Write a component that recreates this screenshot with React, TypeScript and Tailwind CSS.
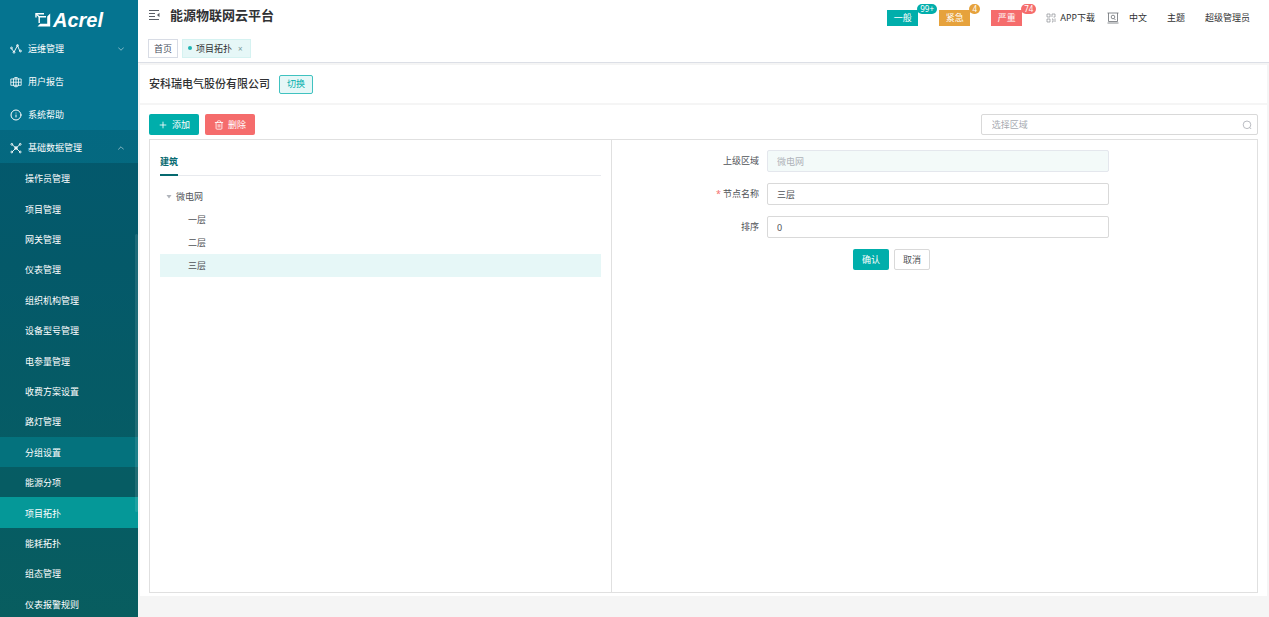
import { ReactNode } from 'react';
import { clsx } from 'clsx';
import { ChevronDown, ChevronUp, Info, Plus, Trash2 } from 'lucide-react';

const systemItems = [
	'操作员管理',
	'项目管理',
	'网关管理',
	'仪表管理',
	'组织机构管理',
	'设备型号管理',
	'电参量管理',
	'收费方案设置',
	'路灯管理',
	'分组设置',
	'能源分项',
	'项目拓扑',
	'能耗拓扑',
	'组态管理',
	'仪表报警规则',
];

const alerts = [
	{ label: '一般', count: '99+', color: 'bg-[#00aeab]' },
	{ label: '紧急', count: '4', color: 'bg-[#e6a23c]' },
	{ label: '严重', count: '74', color: 'bg-[#f56c6c]' },
];

const floors = ['一层', '二层', '三层'];

const LogoMark = () => (
	<svg viewBox="0 0 16 16" className="h-4 w-4" fill="none" stroke="currentColor">
		<path d="M1 5.500V1.700h8" strokeWidth="1.4" />
		<path d="M1.500 2.200 4.500 5" strokeWidth="1.2" />
		<path d="M4.200 11V4.700H11" strokeWidth="1.4" />
		<path d="M15.200 1.500v13H2.500l2.700-2.700h7V4.500z" fill="currentColor" stroke="none" />
	</svg>
);

const TrendIcon = () => (
	<svg viewBox="0 0 12 12" className="h-3 w-3" fill="none" stroke="currentColor" strokeWidth="0.9">
		<path d="M1.500 5.500 4 9l3.500-6.500L10 8.500" />
		<circle cx="1.500" cy="5" r="0.9" />
		<circle cx="4" cy="9.300" r="0.9" />
		<circle cx="7.500" cy="2.500" r="0.9" />
		<circle cx="10.500" cy="8" r="0.9" />
	</svg>
);

const ReportIcon = () => (
	<svg viewBox="0 0 12 12" className="h-3 w-3" fill="none" stroke="currentColor" strokeWidth="0.8">
		<path d="M.8 3h10.400v6.300H.8zM.8 6.200h10.400M3.500 3v6.300M8.500 3v6.300M6 1v10" />
		<path d="M3.500 3c0-2 5-2 5 0M3.500 9.300c0 2 5 2 5 0" />
	</svg>
);

const NodesIcon = () => (
	<svg viewBox="0 0 12 12" className="h-3 w-3" fill="none" stroke="currentColor" strokeWidth="0.9">
		<path d="M2 2.500 6 6l4-3.500M2 10l4-4 4 4" />
		<circle cx="1.800" cy="2.300" r="0.9" />
		<circle cx="10.200" cy="2.300" r="0.9" />
		<circle cx="1.800" cy="10" r="0.9" />
		<circle cx="10.200" cy="10" r="0.9" />
		<circle cx="6" cy="6" r="1.300" />
	</svg>
);

const FoldIcon = () => (
	<svg viewBox="0 0 12 12" className="h-3 w-3" fill="none" stroke="currentColor">
		<path d="M1 1.500h10M1 4.500h6M1 7.500h6M1 10.500h10" />
		<path d="M11.500 3.800v4.400L9 6z" fill="currentColor" stroke="none" />
	</svg>
);

const QrIcon = () => (
	<svg viewBox="0 0 10 10" className="h-[10px] w-[10px] text-[#8b8e94]" fill="none" stroke="currentColor" strokeWidth="0.7">
		<path d="M1 1h3v3H1zM1 6h3v3H1zM6 1h3v3H7.500M6 4V1M6 6h1v3M9 5.500V9M6 9h1" />
	</svg>
);

const ScreenIcon = () => (
	<svg viewBox="0 0 12 12" className="h-3 w-3 text-[#6b6e74]" fill="none" stroke="currentColor" strokeWidth="0.8">
		<path d="M.5 1h11M1.500 1v8.500h9V1M.5 11h11" />
		<circle cx="6" cy="5" r="1.800" />
		<path d="m7 6.500 1.500 1.500" />
	</svg>
);

const SearchIcon = () => (
	<svg viewBox="0 0 10 10" className="absolute top-1.5 right-1.5 h-[10px] w-[10px] text-[#a8abb2]" fill="none" stroke="currentColor" strokeWidth="0.8">
		<circle cx="5" cy="4.800" r="3.800" />
		<path d="m7.700 7.500 1.500 1.500" />
	</svg>
);

const MenuRow = ({ icon, label, open }: { icon: ReactNode; label: string; open?: boolean }) => (
	<a href="#" className={clsx('flex h-[33px] items-center gap-1.5 pt-0.5 pr-3 pl-[10px]', open && 'bg-black/10')}>
		{icon}
		<span className="flex-1">{label}</span>
		{open === true && <ChevronUp className="h-2.5 w-2.5 opacity-60" strokeWidth={2} />}
		{open === false && <ChevronDown className="h-2.5 w-2.5 opacity-60" strokeWidth={2} />}
	</a>
);

const Sidebar = () => (
	<aside className="relative flex w-[138px] shrink-0 flex-col overflow-hidden bg-linear-to-b from-[#057490] from-20% to-[#0b7b7e] text-white">
		<div className="flex h-[31px] items-center justify-center gap-0.5 pt-2">
			<LogoMark />
			<span className="font-['Liberation_Sans',sans-serif] text-[20px] leading-5 font-bold italic">Acrel</span>
		</div>
		<nav className="flex flex-1 flex-col">
			<MenuRow icon={<TrendIcon />} label="运维管理" open={false} />
			<MenuRow icon={<ReportIcon />} label="用户报告" />
			<MenuRow icon={<Info className="h-3 w-3" strokeWidth={2} />} label="系统帮助" />
			<MenuRow icon={<NodesIcon />} label="基础数据管理" open />
			<ul className="-mb-0.5 flex flex-1 flex-col bg-black/24">
				{systemItems.map((item) => (
					<li key={item} className="flex min-h-[30px] flex-1">
						<a
							href="#"
							className={clsx(
								'flex flex-1 items-center pt-0.5 pl-[25px]',
								item === '项目拓扑' && 'bg-[#059898]',
								item === '分组设置' && 'bg-[#04727d]',
							)}
						>
							{item}
						</a>
					</li>
				))}
			</ul>
		</nav>
		<div className="absolute top-[234px] right-0 h-[278px] w-[3px] rounded bg-white/10" />
	</aside>
);

const Header = () => (
	<header className="border-b border-[#dcdfe6] bg-white px-[10px]">
		<div className="flex h-8 items-center pr-[9px] text-[#303133]">
			<button type="button" aria-label="折叠菜单" className="pb-0.5 text-[#5a5e66]">
				<FoldIcon />
			</button>
			<h1 className="ml-[10px] flex-1 pb-0.5 text-[13px] leading-4 font-bold">能源物联网云平台</h1>
			<div className="flex gap-[21px] pt-1">
				{alerts.map((alert) => (
					<button key={alert.label} type="button" className={clsx('relative h-4 w-[31px] text-white', alert.color)}>
						{alert.label}
						<span
							className={clsx(
								'absolute -top-1.5 left-full min-w-[11px] -translate-x-px rounded-full px-[3px] text-[8px] leading-[10px]',
								alert.color,
							)}
						>
							{alert.count}
						</span>
					</button>
				))}
			</div>
			<div className="ml-6 flex items-center pt-1">
				<a href="#" className="flex items-center gap-1">
					<QrIcon />
					APP下载
				</a>
				<button type="button" aria-label="大屏" className="ml-3">
					<ScreenIcon />
				</button>
				<button type="button" className="ml-[10px]">中文</button>
				<button type="button" className="ml-5">主题</button>
				<button type="button" className="ml-5">超级管理员</button>
			</div>
		</div>
		<nav className="flex h-[30px] items-center gap-1 pt-0.5">
			<a href="#" className="border border-[#d8dce5] px-[5px] leading-[17px] text-[#495060]">
				首页
			</a>
			<a href="#" className="flex items-center gap-1 border border-[#d5f2f1] bg-[#e6f7f7] px-[5px] leading-[17px] text-[#303133]">
				<span className="h-1 w-1 rounded-full bg-[#1fb5b3]" />
				项目拓扑
				<span className="px-0.5 text-[8px] text-[#7a9a9a]">×</span>
			</a>
		</nav>
	</header>
);

const Tree = () => (
	<section className="w-[41.75%] border-r border-[#e0e0e0] px-[10px] pt-[10px]">
		<div className="flex border-b border-[#e8eaee] text-[#05696f]">
			<button type="button" className="-mb-px border-b-2 border-[#05696f] pt-1 pb-1 leading-4 font-bold">
				建筑
			</button>
		</div>
		<ul className="mt-[10px] text-[#505357]">
			<li>
				<div className="flex h-[22px] items-center gap-1 pl-1.5">
					<svg viewBox="0 0 6 4" className="h-1 w-1.5 text-[#b0b4bb]" fill="currentColor">
						<path d="M.5 0h5L3 3.500z" />
					</svg>
					微电网
				</div>
				<ul>
					{floors.map((floor) => (
						<li key={floor} className={clsx('flex h-[23px] items-center pl-7', floor === '三层' && 'bg-[#e6f7f7]')}>
							{floor}
						</li>
					))}
				</ul>
			</li>
		</ul>
	</section>
);

interface FieldProps {
	id: string;
	label: string;
	value: string;
	required?: boolean;
	disabled?: boolean;
}

const Field = ({ id, label, value, required, disabled }: FieldProps) => (
	<>
		<label htmlFor={id} className="pr-2 text-right leading-[21px] text-[#505357]">
			{required && <span className="mr-0.5 text-[#f56c6c]">*</span>}
			{label}
		</label>
		<input
			id={id}
			defaultValue={value}
			disabled={disabled}
			className="h-[22px] min-w-0 rounded-xs border border-[#d9d9d9] bg-white px-[9px] text-[#505357] disabled:border-[#e4e7ed] disabled:bg-[#f3faf9] disabled:text-[#aeb2b8]"
		/>
		<span />
	</>
);

const NodeForm = () => (
	<form className="flex-1 pt-[10px]">
		<div className="grid grid-cols-[24%_minmax(0,1fr)_23%] gap-y-[11px]">
			<Field id="parent" label="上级区域" value="微电网" disabled />
			<Field id="name" label="节点名称" value="三层" required />
			<Field id="sort" label="排序" value="0" />
		</div>
		<div className="mt-[11px] flex justify-center gap-[5px] pr-[86px]">
			<button type="button" className="h-[21px] w-9 rounded-xs bg-[#00aeab] text-white">
				确认
			</button>
			<button type="button" className="h-[21px] w-9 rounded-xs border border-[#d9d9d9] text-[#505357]">
				取消
			</button>
		</div>
	</form>
);

export default function App() {
	return (
		<div className="flex min-h-screen bg-[#f5f5f5] font-['Noto_Sans','Noto_Sans_CJK_SC',sans-serif] text-[9px] leading-4">
			<Sidebar />
			<div className="flex min-w-0 flex-1 flex-col">
				<Header />
				<main className="flex flex-1 flex-col gap-0.5 pt-0.5 pr-0.5 pb-[21px] pl-0.5">
					<div className="flex h-[38px] items-center gap-[9px] bg-white px-[9px]">
						<h2 className="text-[11px] font-medium text-[#303133]">安科瑞电气股份有限公司</h2>
						<button type="button" className="h-[19px] rounded-xs border border-[#40c2c0] bg-[#e6f7f7] px-[7px] text-[#00aeab]">
							切换
						</button>
					</div>
					<div className="flex flex-1 flex-col bg-white px-[9px] pt-[9px] pb-[3px]">
						<div className="flex items-center gap-1.5 text-white">
							<button type="button" className="flex h-[21px] items-center gap-1 rounded-xs bg-[#00aeab] px-[9px]">
								<Plus className="h-[10px] w-[10px]" />
								添加
							</button>
							<button type="button" className="flex h-[21px] items-center gap-1 rounded-xs bg-[#f56c6c] px-[9px]">
								<Trash2 className="h-[10px] w-[10px]" strokeWidth={2} />
								删除
							</button>
							<div className="relative ml-auto w-1/4">
								<input
									type="text"
									aria-label="选择区域"
									placeholder="选择区域"
									className="h-[21px] w-full rounded-xs border border-[#d9d9d9] px-[10px] text-[#505357] placeholder:text-[#a8abb2]"
								/>
								<SearchIcon />
							</div>
						</div>
						<div className="mt-1 flex flex-1 border border-[#e0e0e0]">
							<Tree />
							<NodeForm />
						</div>
					</div>
				</main>
			</div>
		</div>
	);
}
